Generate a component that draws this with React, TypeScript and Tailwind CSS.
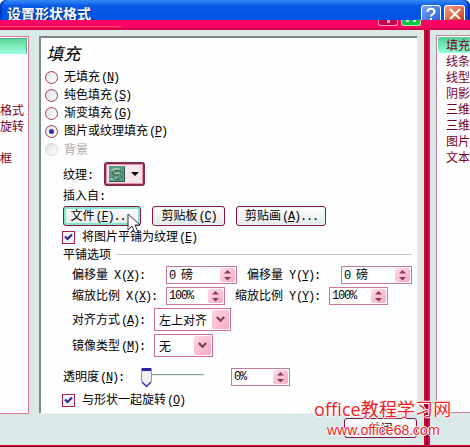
import type { ReactNode } from "react";

const leftItems = ["", "", "", "格式", "旋转", "", "框"];
const rightItems = ["填充", "线条", "线型", "阴影", "三维", "三维", "图片", "文本"];

// Chinese glyphs are 12px wide and everything else is half of that
const Txt = ({ children, hot }: { children: string; hot?: string }) => (
  <span className="inline-flex items-baseline leading-[14px] whitespace-pre">
    {(children.match(/[\u4e00-\u9fff]+|[^\u4e00-\u9fff]+/g) || []).map((part, i) =>
      /[\u4e00-\u9fff]/.test(part) ? (
        <span key={i}>{part}</span>
      ) : (
        <Half key={i}>{part}</Half>
      )
    )}
    {hot && (
      <span className="-mr-px ml-px">
        <Half>(</Half>
        <Half>
          <span className="underline underline-offset-1">{hot[0]}</span>
        </Half>
        <Half>{`)${hot.slice(1)}`}</Half>
      </span>
    )}
  </span>
);

const Half = ({ children }: { children: ReactNode }) => (
  <span className="font-['Liberation_Mono',monospace] tracking-[-1.2px]">
    {children}
  </span>
);

const Radio = ({
  label,
  hot,
  checked,
  disabled,
}: {
  label: string;
  hot?: string;
  checked?: boolean;
  disabled?: boolean;
}) => (
  <div
    className={`flex h-[18px] items-center gap-[6px] pl-[3px] ${disabled ? "text-[#aaa]" : ""}`}
  >
    <span
      className={`flex size-[13px] shrink-0 items-center justify-center rounded-full border bg-linear-to-br from-[#dde2e2] to-white ${disabled ? "border-[#d8d8d8]" : "border-[#9d3d68]"}`}
    >
      {checked && <span className="size-[5px] rounded-full bg-[#3830a8]" />}
    </span>
    <Txt hot={hot}>{label}</Txt>
  </div>
);

const Check = ({ label, hot }: { label: string; hot: string }) => (
  <div className="-ml-px flex h-[14px] items-center gap-[7px]">
    <span className="flex size-[13px] shrink-0 items-center justify-center border border-[#a51c50] bg-[#f4f4f4]">
      <svg width="9" height="9" viewBox="0 0 9 9">
        <path d="M1 3.5 3.5 6 8 1.5" fill="none" stroke="#35229b" strokeWidth="2.2" />
      </svg>
    </span>
    <Txt hot={hot}>{label}</Txt>
  </div>
);

const PushButton = ({
  width,
  active,
  children,
}: {
  width: string;
  active?: boolean;
  children: ReactNode;
}) => (
  <div
    className={`flex h-[20px] items-center justify-center rounded-[3px] border border-[#8c1245] bg-linear-to-b from-white to-[#e4e9e9] ${width} ${active ? "shadow-[inset_0_0_0_2px_#7fe9cb]" : "shadow-[inset_0_0_0_1px_#e3fbfa]"}`}
  >
    {children}
  </div>
);

const Spin = ({ value, width }: { value: string; width: string }) => (
  <div
    className={`flex h-[18px] items-center justify-between border border-[#c4799b] bg-white pr-px pl-[2px] ${width}`}
  >
    <Txt>{value}</Txt>
    <span className="flex h-[14px] w-[15px] items-center justify-center rounded-[2px] bg-linear-to-br from-[#ffdce8] to-[#f9a9c2]">
      <svg width="9" height="12" viewBox="0 0 9 12">
        <path d="M1 4.500 4.500 1 8 4.500zM1 8l3.500 3.500L8 8z" fill="#844057" />
      </svg>
    </span>
  </div>
);

const Combo = ({ value, width }: { value: string; width: string }) => (
  <div
    className={`flex h-[23px] items-center justify-between border border-[#cf7197] bg-white pr-px pl-[4px] ${width}`}
  >
    <Txt>{value}</Txt>
    <span className="flex h-[19px] w-[17px] items-center justify-center rounded-[2px] bg-linear-to-br from-[#ffd5e3] to-[#f9a9c2]">
      <svg width="9" height="7" viewBox="0 0 9 7">
        <path d="M.8 1 4.500 4.700 8.200 1" fill="none" stroke="#7b4056" strokeWidth="2.200" />
      </svg>
    </span>
  </div>
);

const TitleBar = () => (
  <div className="flex h-[20px] items-end justify-between rounded-t-[6px] bg-linear-to-b from-[#368af5] via-[#0759e6] via-30% to-[#0053e4] pr-[5px] pl-[7px] shadow-[inset_2px_0_0_#003cc0,inset_-2px_0_0_#002fb0]">
    <span className="text-[14px] leading-[14px] font-bold text-white [text-shadow:1px_1px_0_#002a80]">
      设置形状格式
    </span>
    <div className="flex gap-[3px]">
      <span className="flex h-[15px] w-[20px] items-center justify-center rounded-t-[3px] border border-b-0 border-white bg-linear-to-br from-[#7ba4f6] to-[#2c61dc]">
        <svg width="12" height="13" viewBox="0 0 12 13">
          <path d="M2.500 5c0-4.500 7-4.500 7 0 0 2-3.500 2-3.500 4.500M6 11v2" fill="none" stroke="#fff" strokeWidth="2" />
        </svg>
      </span>
      <span className="flex h-[15px] w-[21px] items-center justify-center rounded-t-[3px] border border-b-0 border-white bg-linear-to-br from-[#f09a7f] to-[#cf3b13]">
        <svg width="12" height="12" viewBox="0 0 12 12">
          <path d="M1 2 11 12M11 2 1 12" stroke="#fff" strokeWidth="2" />
        </svg>
      </span>
    </div>
  </div>
);

const FillPanel = () => (
  <main className="h-[377px] w-[378px] border-t-2 border-l-2 border-[#7c8582] bg-[#fefefe] pl-px shadow-[1px_1px_0_#f5eeee]">
    <h1 className="ml-[6px] flex h-[30px] -skew-x-14 items-center text-[17px]">
      填充
    </h1>
    <div>
      <Radio label="无填充" hot="N" />
      <Radio label="纯色填充" hot="S" />
      <Radio label="渐变填充" hot="G" />
      <Radio label="图片或纹理填充" hot="P" checked />
      <Radio label="背景" disabled />
    </div>

    <div className="ml-[21px]">
      <div className="mt-[4px] flex h-[24px] items-center">
        <div className="w-[41px]">
          <Txt>纹理:</Txt>
        </div>
        <div className="flex h-[24px] w-[41px] items-center justify-between rounded-[3px] border-2 border-[#812a50] bg-[#f7e6ee] pr-[4px] pl-[3px] outline-1 -outline-offset-3 outline-[#f28dae]">
          <svg width="16" height="16" viewBox="0 0 16 16">
            <path d="M0 0h16v16H0z" fill="#5f9b80" />
            <path d="M2 5q4-4 9-1M6 8q5-2 5 2M1 13q5 0 7-1" fill="none" stroke="#a5d1b5" strokeWidth="1.500" />
            <path d="M3 5q0 5 5 4t5 3M6 5q4-2 8 2M3 11q3 4 8 2M.5 15.500h15V1" fill="none" stroke="#26584b" />
          </svg>
          <svg width="8" height="4" viewBox="0 0 8 4">
            <path d="M0 0h8L4 4z" />
          </svg>
        </div>
      </div>
      <div className="mt-[3px] flex h-[14px] items-center">
        <Txt>插入自:</Txt>
      </div>

      <div className="mt-[3px] flex h-[20px] gap-[11px]">
        <div className="relative">
          <PushButton width="w-[78px]" active>
            <span className="-ml-[3px] flex">
              <Txt hot="F...">文件</Txt>
            </span>
          </PushButton>
          <svg className="absolute top-[7px] left-[64px] z-10" width="13" height="21" viewBox="0 0 13 21">
            <path d="M1 1v16l4-4 3 7 3-1-3-7h5z" fill="#fff" stroke="#3e3040" />
          </svg>
        </div>
        <PushButton width="w-[73px]">
          <Txt hot="C">剪贴板</Txt>
        </PushButton>
        <PushButton width="w-[90px]">
          <Txt hot="A...">剪贴画</Txt>
        </PushButton>
      </div>

      <div className="mt-[4px]">
        <Check label="将图片平铺为纹理" hot="E" />
      </div>
      <div className="mt-[3px] flex h-[14px] items-center gap-[5px]">
        <Txt>平铺选项</Txt>
        <span className="h-px w-[296px] bg-[#b8c9c5]" />
      </div>

      <div className="ml-[9px]">
        <div className="mt-[5px] flex h-[18px] items-center">
          <div className="flex w-[94px]">
            <Txt hot="X:">偏移量 X</Txt>
          </div>
          <Spin value="0 磅" width="w-[71px]" />
          <div className="ml-[10px] flex w-[94px]">
            <Txt hot="Y:">偏移量 Y</Txt>
          </div>
          <Spin value="0 磅" width="w-[71px]" />
        </div>
        <div className="mt-[3px] flex h-[18px] items-center">
          <div className="flex w-[94px]">
            <Txt hot="X:">缩放比例 X</Txt>
          </div>
          <Spin value="100%" width="w-[59px]" />
          <div className="ml-[10px] flex w-[94px]">
            <Txt hot="Y:">缩放比例 Y</Txt>
          </div>
          <Spin value="100%" width="w-[59px]" />
        </div>
        <div className="mt-[3px] flex h-[23px] items-center">
          <div className="flex w-[82px]">
            <Txt hot="A:">对齐方式</Txt>
          </div>
          <Combo value="左上对齐" width="w-[77px]" />
        </div>
        <div className="mt-[3px] flex h-[23px] items-center">
          <div className="flex w-[82px]">
            <Txt hot="M:">镜像类型</Txt>
          </div>
          <Combo value="无" width="w-[59px]" />
        </div>
      </div>

      <div className="mt-[11px] flex h-[18px] items-center">
        <div className="flex w-[77px]">
          <Txt hot="N:">透明度</Txt>
        </div>
        <svg width="64" height="22" viewBox="0 0 64 22">
          <path d="M11 8.500h53" stroke="#8d9b97" />
          <path d="M11 9.500h53" stroke="#e0efea" />
          <path d="M1.500 2.500h10v13l-5 5-5-5z" fill="#edf1f1" stroke="#a88ba5" />
          <path d="M2 2h9v3H2z" fill="#2924a8" />
          <path d="M2 16l4.500 4.500L11 16" fill="none" stroke="#443399" strokeWidth="1.500" />
        </svg>
        <span className="ml-[27px]">
          <Spin value="0%" width="w-[59px]" />
        </span>
      </div>
      <div className="mt-[7px]">
        <Check label="与形状一起旋转" hot="O" />
      </div>
    </div>
  </main>
);

export default function App() {
  return (
    <div className="relative flex h-[447px] w-[470px] flex-col overflow-hidden bg-white font-['Noto_Sans_CJK_SC',sans-serif] text-[12px] text-black">
      <TitleBar />
      <div className="flex h-[10px] items-start justify-between border-b-2 border-[#d80049] bg-[#ff0065] pr-[49px]">
        <span className="mt-[6px] h-px w-[121px] bg-[#ff4b54]" />
        <div className="flex gap-[3px]">
          <span className="flex h-[6px] w-[20px] justify-center rounded-b-[3px] border border-t-0 border-[#ff9cb9] bg-[#c9084c]">
            <span className="h-[3px] w-[3px] bg-[#ffb0cc]" />
          </span>
          <span className="flex h-[6px] w-[20px] justify-between rounded-b-[3px] border border-t-0 border-[#aaf0ad] bg-[#0ac947] px-[4px]">
            <span className="h-[2px] w-[3px] bg-[#b8ffd0]" />
            <span className="h-[2px] w-[3px] bg-[#b8ffd0]" />
          </span>
        </div>
      </div>

      <div className="flex grow bg-[#d8e9e7]">
        <aside className="mt-[6px] h-[378px] w-[29px] border border-l-0 border-[#dd7799] bg-[#fefefe] text-[#78001e]">
          <div className="mt-px mr-px h-[16px] border-t border-r border-[#58a882] bg-linear-to-b from-[#5dd99a] to-[#a1ffe1]" />
          {leftItems.map((item, i) => (
            <div key={i} className="flex h-[16px] items-center">
              <Txt>{item}</Txt>
            </div>
          ))}
        </aside>
        <div className="mt-[6px] ml-[10px]">
          <FillPanel />
          <div className="mt-[5px] ml-[305px]">
            <PushButton width="w-[73px]">
              <Txt>关闭</Txt>
            </PushButton>
          </div>
        </div>
        <div className="ml-[7px] flex w-[6px]">
          <span className="w-[2px] bg-[#d80032]" />
          <span className="w-[2px] bg-[#8b001c]" />
          <span className="w-[2px] bg-[#ed0061]" />
        </div>
        <aside className="mt-[5px] ml-[6px] h-[378px] w-[34px] border border-r-0 border-[#cb819b] bg-[#fefefe] pt-px text-[#78001e]">
          {rightItems.map((item, i) => (
            <div
              key={item + i}
              className={`flex h-[16px] items-center ${i === 0 ? "ml-px rounded-l-[2px] bg-linear-to-b from-[#57cc94] to-[#8effdb] pl-[8px]" : "pl-[9px]"}`}
            >
              <Txt>{item}</Txt>
            </div>
          ))}
        </aside>
      </div>
      <div className="h-[2px] shrink-0 border-t border-[#dd0037] bg-[#87001c]" />

      <div className="absolute top-[397px] left-[314px] z-20 flex flex-col whitespace-nowrap text-[#f51b22] [text-shadow:1px_0_0_#fff,-1px_0_0_#fff,0_1px_0_#fff,0_-1px_0_#fff]">
        <span className="font-['Open_Sans','Noto_Sans_CJK_SC',sans-serif] text-[18px] leading-[24px] tracking-[0.1px]">
          office教程学习网
        </span>
        <span className="ml-[13px] font-['Liberation_Sans',sans-serif] text-[14px] leading-[18px]">
          www.office68.com
        </span>
      </div>
    </div>
  );
}
